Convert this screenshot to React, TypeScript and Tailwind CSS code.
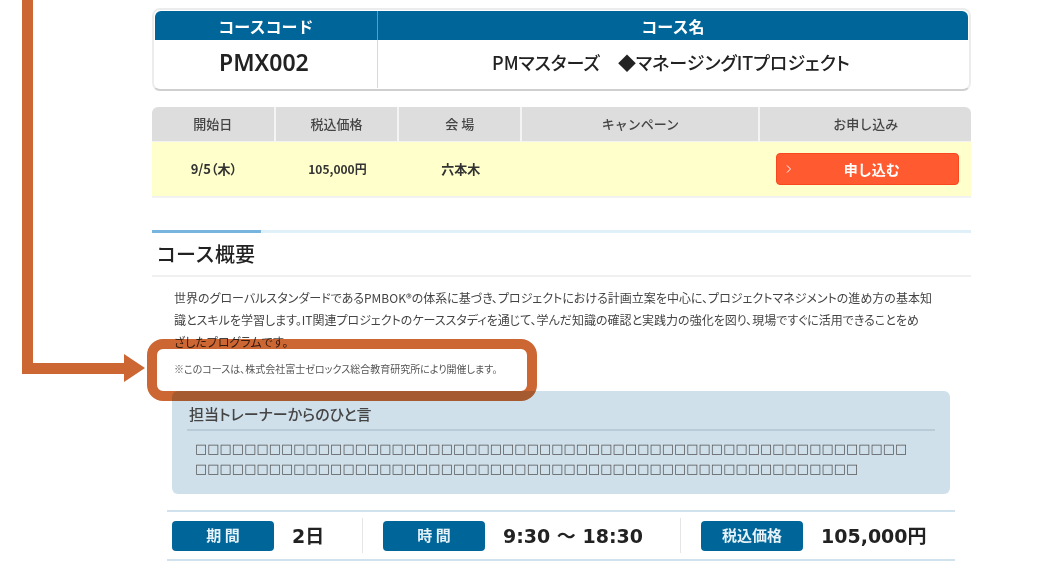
import type { ReactNode } from 'react';

const TRAINER_LINES = ['□'.repeat(58), '□'.repeat(54)];

function CourseTitle() {
  return (
    <div className="rounded-lg border-2 border-[#ececec] border-b-[#cfcfcf] p-px">
      <table className="w-full table-fixed border-separate border-spacing-0 text-center">
        <thead>
          <tr className="h-[29px] text-base leading-5 text-white">
            <th className="w-[27.4%] rounded-tl-md border-r border-[#5b9dbf] bg-[#006699] font-bold">コースコード</th>
            <th className="rounded-tr-md bg-[#006699] font-bold">コース名</th>
          </tr>
        </thead>
        <tbody>
          <tr className="h-[48px] text-[#222]">
            <td className="border-r border-[#d8d8d8] pr-1 pb-1 font-['Noto_Sans','Noto_Sans_CJK_JP',sans-serif] text-[23px] leading-7 font-semibold">
              PMX002
            </td>
            <td className="pr-1 pb-1 text-lg leading-7 font-medium [font-feature-settings:'palt']">
              PMマスターズ　◆マネージングITプロジェクト
            </td>
          </tr>
        </tbody>
      </table>
    </div>
  );
}

function Schedule() {
  return (
    <table className="mt-4 w-full table-fixed border-separate border-spacing-0 border-b-2 border-[#f2f2f2] text-center text-[13px] leading-5 text-[#444]">
      <thead>
        <tr className="h-[35px]">
          <th className="w-[15.1%] rounded-tl-md border-r-2 border-b border-[#f4f4f4] bg-[#dddddd] font-medium">開始日</th>
          <th className="w-[15.1%] border-r-2 border-b border-[#f4f4f4] bg-[#dddddd] font-medium">税込価格</th>
          <th className="w-[15%] border-r-2 border-b border-[#f4f4f4] bg-[#dddddd] font-medium">会 場</th>
          <th className="w-[29.1%] border-r-2 border-b border-[#f4f4f4] bg-[#dddddd] font-medium">キャンペーン</th>
          <th className="rounded-tr-md border-b border-[#f4f4f4] bg-[#dddddd] font-medium">お申し込み</th>
        </tr>
      </thead>
      <tbody>
        <tr className="h-[54px] bg-[#ffffcc] font-bold text-[#333]">
          <td className="[font-feature-settings:'palt']">9/5（木）</td>
          <td className="text-xs">105,000円</td>
          <td>六本木</td>
          <td></td>
          <td className="px-3 pl-4">
            <button
              type="button"
              className="flex h-8 w-full items-center rounded border border-[#f9481f] bg-[#ff5a30] px-2 text-sm font-bold text-white"
            >
              <svg className="h-2 w-2" viewBox="0 0 8 8" fill="none" stroke="currentColor">
                <path d="M2 0.5 L5.5 4 L2 7.5" />
              </svg>
              <span className="flex-1">申し込む</span>
            </button>
          </td>
        </tr>
      </tbody>
    </table>
  );
}

function Detail({ label, children }: { label: string; children: ReactNode }) {
  return (
    <>
      <dt className="flex h-[30px] w-[102px] items-center justify-center rounded bg-[#006699] text-[15px] font-bold text-[#e6f2f8]">
        {label}
      </dt>
      <dd className="ml-[18px] font-['DejaVu_Sans','Noto_Sans_CJK_JP',sans-serif] text-[19px] leading-6 font-bold whitespace-nowrap text-[#222]">
        {children}
      </dd>
    </>
  );
}

// Arrow that leads down from the top of the page to the framed note
function GuideArrow() {
  return (
    <svg className="absolute top-0 left-0 h-[384px] w-[146px]" viewBox="0 0 146 384" fill="#cc6633">
      <path d="M22 0 H33 V363 H124 V354 L145 368 L124 382 V374 H22 Z" />
    </svg>
  );
}

export default function App() {
  return (
    <div className="relative bg-white pt-2 pr-[66px] pl-[152px] font-['Noto_Sans_CJK_JP',sans-serif]">
      <GuideArrow />
      <CourseTitle />
      <Schedule />

      <section className="mt-8">
        <div className="h-[3px] bg-[#e0f0f8]">
          <div className="h-full w-[109px] bg-[#77b5df]" />
        </div>
        <h2 className="border-b-2 border-[#f0f0f0] px-1 pt-[7px] pb-[7px] text-xl leading-7 font-medium text-[#222]">コース概要</h2>

        <div className="px-[22px] pt-2.5">
          <p className="text-xs leading-[22px] whitespace-nowrap text-[#444] [font-feature-settings:'palt']">
            世界のグローバルスタンダードであるPMBOK®の体系に基づき、プロジェクトにおける計画立案を中心に、プロジェクトマネジメントの進め方の基本知
            <br />
            識とスキルを学習します。IT関連プロジェクトのケーススタディを通じて、学んだ知識の確認と実践力の強化を図り、現場ですぐに活用できることをめ
            <br />
            ざしたプログラムです。
          </p>
          <div className="relative mt-1.5 w-fit">
            <p className="text-[10px] leading-5 whitespace-nowrap text-[#555] [font-feature-settings:'palt']">
              ※このコースは、株式会社富士ゼロックス総合教育研究所により開催します。
            </p>
            <div className="absolute -top-5 -left-[27px] h-[62px] w-[390px] rounded-2xl border-10 border-[#cc6633] mix-blend-multiply" />
          </div>
        </div>

        <div className="mt-3 mr-[21px] ml-5 h-[103px] rounded-md bg-[#cfe0eb] px-[15px] pt-3">
          <h3 className="border-b-2 border-[#b9cbd7] px-0.5 pb-1 text-[15px] leading-[22px] font-medium text-[#444] [font-feature-settings:'palt']">
            担当トレーナーからのひと言
          </h3>
          <p className="mt-2 px-2 font-['DejaVu_Sans',sans-serif] text-[13px] leading-5 font-bold whitespace-nowrap text-[#555]">
            {TRAINER_LINES[0]}
            <br />
            {TRAINER_LINES[1]}
          </p>
        </div>
      </section>

      <dl className="mt-4 mr-4 ml-[15px] flex h-[51px] border-y-2 border-[#cfe2ee] px-[5px] py-1.5">
        <div className="flex w-[191px] items-center border-r border-[#e5e5e5]">
          <Detail label="期 間">2日</Detail>
        </div>
        <div className="flex flex-1 items-center border-r border-[#e5e5e5] pl-5">
          <Detail label="時 間">9:30 ～ 18:30</Detail>
        </div>
        <div className="flex w-[269px] items-center pl-5">
          <Detail label="税込価格">105,000円</Detail>
        </div>
      </dl>
    </div>
  );
}
